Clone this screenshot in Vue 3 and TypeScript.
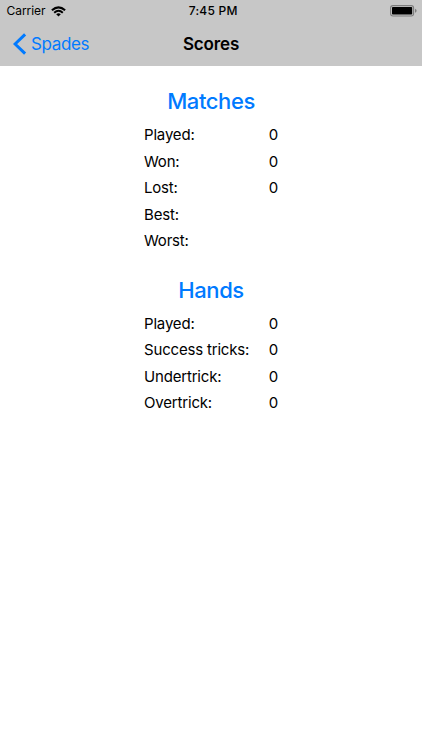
<script setup lang="ts">
interface Row { label: string; value: string }
interface Section { title: string; rows: Row[] }
const sections: Section[] = [
  { title: 'Matches', rows: [
    { label: 'Played:', value: '0' },
    { label: 'Won:', value: '0' },
    { label: 'Lost:', value: '0' },
    { label: 'Best:', value: '' },
    { label: 'Worst:', value: '' },
  ] },
  { title: 'Hands', rows: [
    { label: 'Played:', value: '0' },
    { label: 'Success tricks:', value: '0' },
    { label: 'Undertrick:', value: '0' },
    { label: 'Overtrick:', value: '0' },
  ] },
]
</script>

<template>
  <div class="screen">
    <header class="top">
      <div class="status">
        <div class="carrier">
          <span class="carrier-name">Carrier</span>
          <svg class="wifi" width="15" height="11" viewBox="0 0 15 11">
            <path d="M0.9 4.2Q7.5 -1.6 14.1 4.2" fill="none" stroke="#000" stroke-width="2.1" />
            <path d="M3.2 6.7Q7.5 2.9 11.8 6.7" fill="none" stroke="#000" stroke-width="2" />
            <path d="M5.2 8.3Q7.5 6.4 9.8 8.3L7.5 10.6Z" />
          </svg>
        </div>
        <span class="time">7:45 PM</span>
        <svg class="battery" width="27" height="12" viewBox="0 0 27 12">
          <rect x="0.6" y="0.6" width="23" height="10.4" rx="2.4" fill="none" stroke="#7d7d7d" stroke-width="1.1" />
          <rect x="2" y="2" width="20.2" height="7.6" rx="0.8" />
          <path d="M25 3.8Q26.6 4.4 26.6 5.8Q26.6 7.2 25 7.8Z" fill="#7d7d7d" />
        </svg>
      </div>
      <nav class="nav">
        <div class="back">
          <svg width="14" height="22" viewBox="0 0 14 22">
            <path d="M12.1 1.4L2.1 11L12.1 20.6" fill="none" stroke="#007aff" stroke-width="3" />
          </svg>
          <span class="back-label">Spades</span>
        </div>
        <h1 class="title">Scores</h1>
      </nav>
    </header>
    <main class="content">
      <section v-for="s in sections" :key="s.title" class="section">
        <h2 class="heading">{{ s.title }}</h2>
        <div v-for="r in s.rows" :key="r.label" class="row">
          <span>{{ r.label }}</span><span>{{ r.value }}</span>
        </div>
      </section>
    </main>
  </div>
</template>

<style>
body { margin: 0; background: #fff; }
</style>
<style scoped>
.screen { height: 750px; overflow: hidden; background: #fff; color: #000; font-family: Inter, sans-serif; }
.top { height: 66px; background: #c7c7c7; }
.status { height: 22px; padding: 0 5px 0 6.5px; display: grid; grid-template-columns: 1fr auto 1fr; align-items: center; font-size: 12px; }
.carrier { display: flex; align-items: center; gap: 6px; }
.carrier-name { line-height: 16px; letter-spacing: -0.05px; }
.time { margin-left: 3px; line-height: 16px; font-weight: 550; letter-spacing: 0.25px; }
.battery { justify-self: end; }
.nav { height: 43px; padding: 0 13px; display: grid; grid-template-columns: 1fr auto 1fr; align-items: center; }
.back { display: flex; align-items: center; gap: 4px; color: #007aff; font-size: 17px; letter-spacing: -0.35px; }
.title { margin: 0; font-size: 17px; font-weight: 600; letter-spacing: -0.15px; }
.content { width: 134px; margin: 0 auto; padding-top: 21px; }
.section { margin-bottom: 21.5px; }
.heading { margin: 0 0 6.5px; line-height: 28px; font-size: 22px; font-weight: 550; letter-spacing: -0.4px; color: #007aff; text-align: center; }
.row { height: 26.5px; display: flex; align-items: center; justify-content: space-between; font-size: 15px; letter-spacing: -0.18px; white-space: nowrap; }
</style>
